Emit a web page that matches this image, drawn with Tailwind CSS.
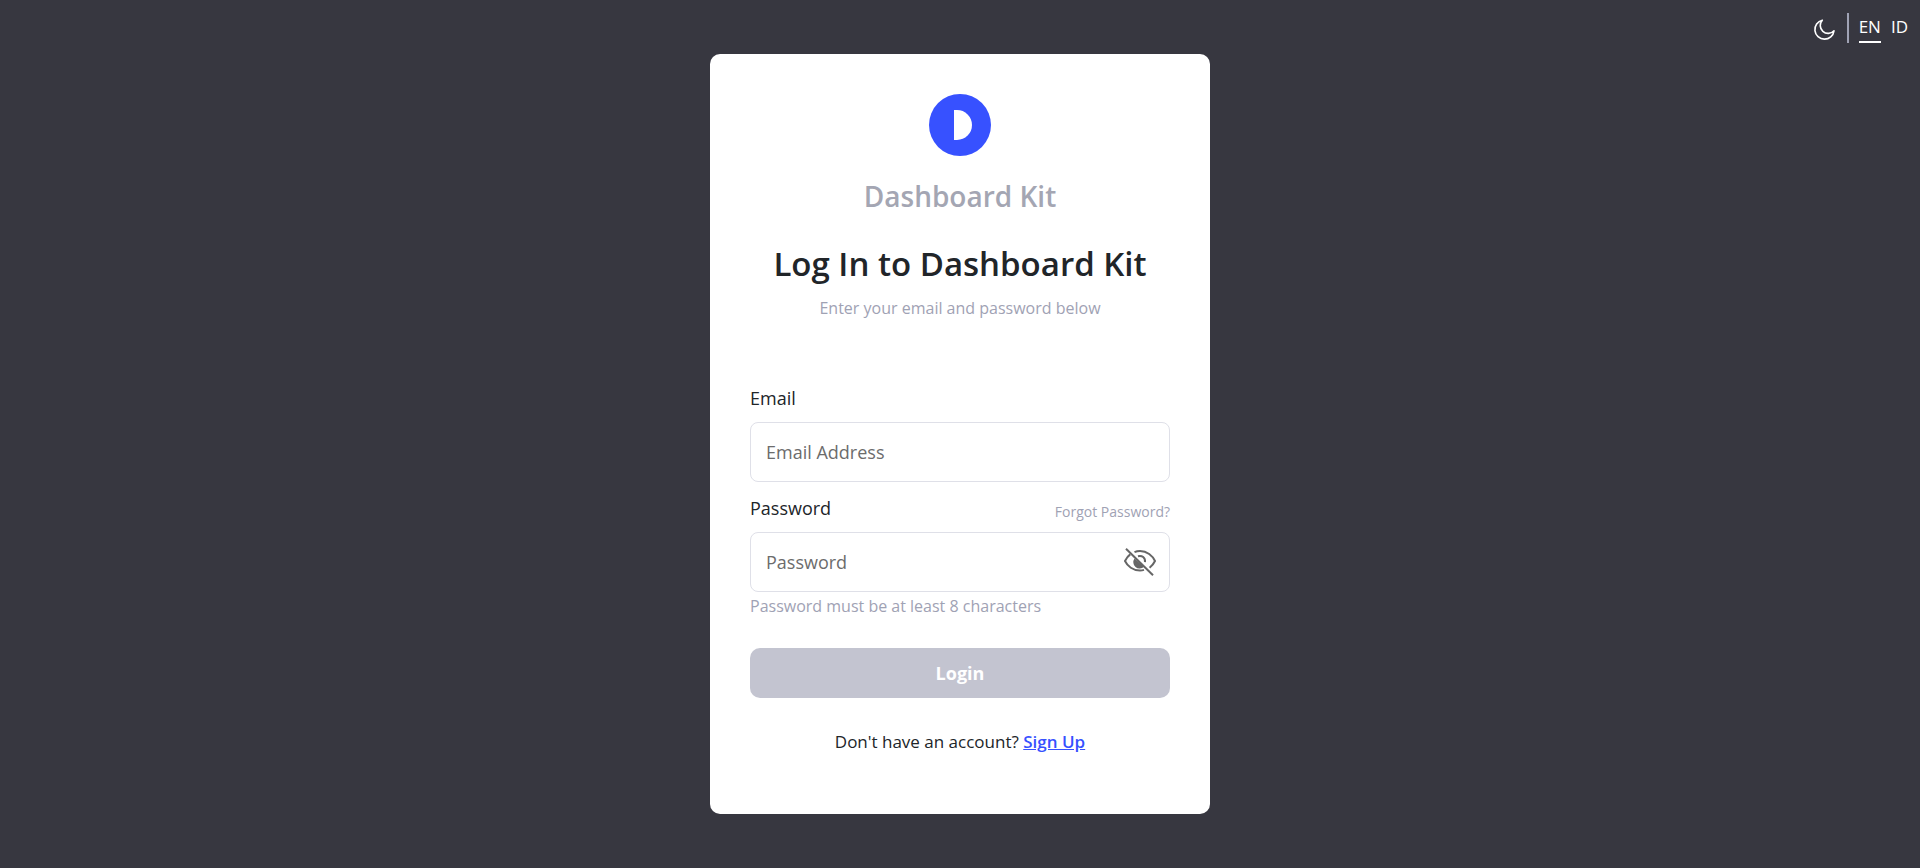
<!DOCTYPE html>
<html lang="en">
<head>
<meta charset="utf-8">
<meta name="viewport" content="width=device-width, initial-scale=1">
<title>Dashboard Kit</title>
<script src="https://cdn.jsdelivr.net/npm/@tailwindcss/browser@4"></script>
</head>
<body class="relative flex min-h-screen items-center justify-center bg-[#373740] font-['Open_Sans','Noto_Sans',sans-serif] text-[#212529]">
  <nav class="absolute top-[13px] right-3 flex items-start text-[17px] text-white" aria-label="Preferences">
    <button type="button" class="mt-1.5 mr-3" aria-label="Dark mode">
      <svg class="size-[22px]" viewBox="0 0 22 22" fill="none" stroke="currentColor" stroke-width="1.6" stroke-linejoin="round"><path d="M9.300 1.200a9.600 9.600 0 1 0 11.700 10.600A7.300 7.300 0 0 1 9.300 1.200z"/></svg>
    </button>
    <span class="mr-2.5 h-[30px] w-0.5 bg-[#9fa2b4]"></span>
    <button type="button" class="mr-2.5 border-b-2 border-white leading-7">EN</button>
    <button type="button" class="leading-7">ID</button>
  </nav>

  <main class="w-full max-w-[500px] rounded-[10px] bg-white px-10 py-10 pb-15">
    <header class="flex flex-col items-center text-center">
      <svg class="size-[62px]" viewBox="0 0 62 62" role="img" aria-label="Dashboard Kit logo"><circle cx="31" cy="31" r="31" fill="#3751ff"/><path d="M25 16h3a15 15 0 0 1 0 30h-3z" fill="#fff"/></svg>
      <p class="mt-5 text-[28px] leading-10 font-semibold text-[#a4a6b3]">Dashboard Kit</p>
      <h1 class="mt-6 text-[33px] leading-12 font-semibold">Log In to Dashboard Kit</h1>
      <p class="mt-2 text-base leading-6 text-[#9fa2b4]">Enter your email and password below</p>
    </header>

    <form class="mt-16">
      <label for="email" class="block text-lg leading-7">Email</label>
      <input id="email" type="email" placeholder="Email Address" class="mt-2.5 block h-15 w-full rounded-lg border border-[#dfe0e8] px-[15px] text-lg placeholder:text-[#6c6c6c]">
      <div class="mt-3 flex items-end justify-between">
        <label for="password" class="text-lg leading-7">Password</label>
        <a href="#" class="text-sm leading-5 text-[#9fa2b4]">Forgot Password?</a>
      </div>
      <div class="mt-2.5 flex h-15 items-center rounded-lg border border-[#dfe0e8] px-[11px] pl-[15px]">
        <input id="password" type="password" placeholder="Password" class="h-full min-w-0 flex-1 text-lg outline-none placeholder:text-[#6c6c6c]">
        <button type="button" class="text-[#666]" aria-label="Show password">
          <svg class="h-7 w-9" viewBox="0 0 36 28" fill="none" stroke="currentColor" stroke-width="2"><path d="M12.500 4.200C14.200 3.400 16 3 18 3c7 0 12.500 4.800 15 10-1.300 2.700-3.100 5-5.400 6.800M22 21.900c-1.300.4-2.600.6-4 .6-7 0-12.500-4.300-15-9.500 1.300-2.600 2.900-4.900 5.200-6.600"/><path d="M16 8.200c4-1.200 7.500 1.500 7 6"/><path d="M12.500 10.500l9.500 8.200a6.300 6.300 0 0 1-9.500-8.200z" fill="currentColor" stroke="none"/><path d="M4 .8l27 26.400"/></svg>
        </button>
      </div>
      <p class="text-base leading-7 text-[#9fa2b4]">Password must be at least 8 characters</p>
      <button type="submit" class="mt-7 block h-[50px] w-full rounded-[10px] bg-[#c3c4d0] text-lg font-bold text-white">Login</button>
    </form>
    <p class="mt-8 text-center text-[17px] leading-6">Don't have an account? <a href="#" class="font-semibold text-[#3751ff] underline">Sign Up</a></p>
  </main>
</body>
</html>
